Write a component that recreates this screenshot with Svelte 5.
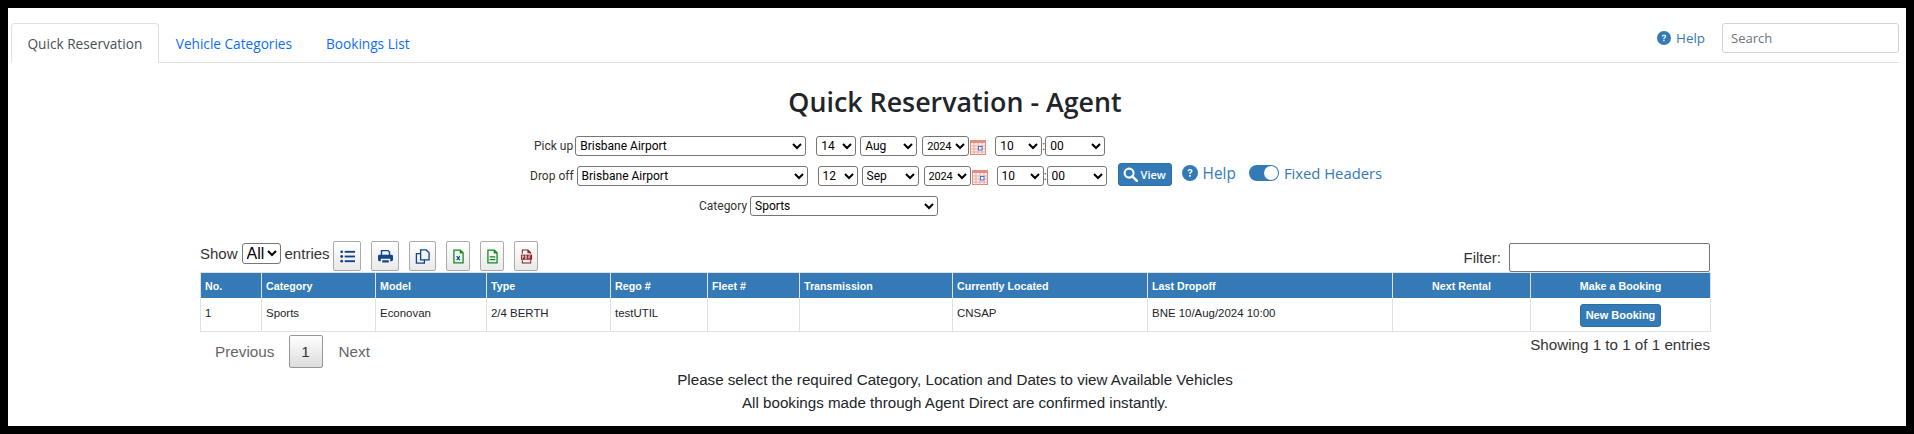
<script lang="ts">
  const columns = [
    { label: "No.", width: 61 },
    { label: "Category", width: 114 },
    { label: "Model", width: 111 },
    { label: "Type", width: 124 },
    { label: "Rego #", width: 97 },
    { label: "Fleet #", width: 92 },
    { label: "Transmission", width: 153 },
    { label: "Currently Located", width: 195 },
    { label: "Last Dropoff", width: 245 },
    { label: "Next Rental", width: 138, center: true },
    { label: "Make a Booking", width: 180, center: true },
  ];

  const row = ["1", "Sports", "Econovan", "2/4 BERTH", "testUTIL", "", "", "CNSAP", "BNE 10/Aug/2024 10:00", ""];
  const days = ["12", "14"];
  const months = ["Aug", "Sep"];
</script>

<div class="frame">
  <div class="page">
    <nav class="tabs">
      <a class="tab active" href="#quick">Quick Reservation</a>
      <a class="tab" href="#categories">Vehicle Categories</a>
      <a class="tab" href="#bookings">Bookings List</a>
      <div class="tabs-right">
        <a class="help" href="#help">
          <svg class="q-icon small" viewBox="0 0 16 16"><circle cx="8" cy="8" r="8" fill="#337ab7" /><path d="M5.6 6.2C5.7 4.8 6.7 4 8.1 4c1.4 0 2.4.8 2.4 2 0 1-.6 1.4-1.2 1.8-.5.3-.7.6-.7 1.2H7.2c0-1 .3-1.5 1-2 .5-.3.8-.6.8-1 0-.5-.4-.8-.9-.8-.6 0-1 .4-1.1 1z" fill="#fff" /><rect x="7.1" y="10" width="1.6" height="1.7" fill="#fff" /></svg>
          Help
        </a>
        <input class="search" type="text" placeholder="Search" />
      </div>
    </nav>

    <h1>Quick Reservation - Agent</h1>

    <form class="filters">
      <div class="line pickup">
        <label for="pick">Pick up</label>
        <select id="pick" class="loc"><option>Brisbane Airport</option></select>
        <select class="day"><option selected>14</option>{#each days as d}<option>{d}</option>{/each}</select>
        <select class="month"><option selected>Aug</option>{#each months as m}<option>{m}</option>{/each}</select>
        <select class="year"><option>2024</option></select>
        <svg class="cal" viewBox="0 0 16 16"><rect x=".5" y="1.500" width="15" height="14" fill="#fdf3f1" stroke="#dd8277" /><rect x="0" y="1" width="16" height="3" fill="#e58d83" /><path d="M0 7h16M0 10h16M0 13h16M4 4v12M8 4v12M12 4v12" stroke="#eda79e" stroke-width="1" /><rect x="8.500" y="7.500" width="3.500" height="3.500" fill="#fff" stroke="#3f73e0" /></svg>
        <select class="hour"><option>10</option></select>
        <span class="colon">:</span>
        <select class="minute"><option>00</option></select>
      </div>
      <div class="line dropoff">
        <label for="drop">Drop off</label>
        <select id="drop" class="loc"><option>Brisbane Airport</option></select>
        <select class="day"><option selected>12</option>{#each days as d}<option>{d}</option>{/each}</select>
        <select class="month"><option selected>Sep</option>{#each months as m}<option>{m}</option>{/each}</select>
        <select class="year"><option>2024</option></select>
        <svg class="cal" viewBox="0 0 16 16"><rect x=".5" y="1.500" width="15" height="14" fill="#fdf3f1" stroke="#dd8277" /><rect x="0" y="1" width="16" height="3" fill="#e58d83" /><path d="M0 7h16M0 10h16M0 13h16M4 4v12M8 4v12M12 4v12" stroke="#eda79e" stroke-width="1" /><rect x="8.500" y="7.500" width="3.500" height="3.500" fill="#fff" stroke="#3f73e0" /></svg>
        <select class="hour"><option>10</option></select>
        <span class="colon">:</span>
        <select class="minute"><option>00</option></select>
        <button type="button" class="view">
          <svg viewBox="0 0 16 16" width="15" height="15"><circle cx="6.5" cy="6.5" r="4.8" fill="none" stroke="#fff" stroke-width="2.2" /><path d="M10 10l4.8 4.8" stroke="#fff" stroke-width="2.6" stroke-linecap="round" /></svg>
          View
        </button>
        <a class="help big" href="#help">
          <svg class="q-icon" viewBox="0 0 16 16"><circle cx="8" cy="8" r="8" fill="#337ab7" /><path d="M5.6 6.2C5.7 4.8 6.7 4 8.1 4c1.4 0 2.4.8 2.4 2 0 1-.6 1.4-1.2 1.8-.5.3-.7.6-.7 1.2H7.2c0-1 .3-1.5 1-2 .5-.3.8-.6.8-1 0-.5-.4-.8-.9-.8-.6 0-1 .4-1.1 1z" fill="#fff" /><rect x="7.1" y="10" width="1.6" height="1.7" fill="#fff" /></svg>
          Help
        </a>
        <span class="toggle"><span class="knob"></span></span>
        <span class="toggle-label">Fixed Headers</span>
      </div>
      <div class="line category">
        <label for="cat">Category</label>
        <select id="cat" class="cat-select"><option>Sports</option></select>
      </div>
    </form>

    <section class="listing">
      <div class="toolbar">
        <span class="show">Show
          <select class="entries"><option>All</option></select>
          entries</span>
        <div class="buttons">
          <button type="button" class="tool" style="width:28px" aria-label="Columns">
            <svg viewBox="0 0 16 16" width="15" height="15"><g fill="#12448a"><circle cx="1.8" cy="3" r="1.5" /><circle cx="1.8" cy="8" r="1.5" /><circle cx="1.8" cy="13" r="1.5" /><rect x="5" y="2" width="11" height="2" /><rect x="5" y="7" width="11" height="2" /><rect x="5" y="12" width="11" height="2" /></g></svg>
          </button>
          <button type="button" class="tool" style="width:28px" aria-label="Print">
            <svg viewBox="0 0 16 16" width="15" height="15"><path d="M3 6V1h8l2 2v3h-1.5V3.5L10.5 2.5h-6V6z M4.5 12h7v2.5h-7z M3 13H1.5C.7 13 0 12.3 0 11.500V7.500C0 6.700.7 6 1.500 6h13c.8 0 1.500.7 1.500 1.500v4c0 .8-.7 1.500-1.500 1.500H13v-2.500H3z" fill="#12448a" /></svg>
          </button>
          <button type="button" class="tool" style="width:27px" aria-label="Copy">
            <svg viewBox="0 0 16 16" width="15" height="15" fill="none" stroke="#12448a" stroke-width="1.400"><path d="M6 1h6l3 3v7.500H6z" /><path d="M6 5H1.500v10H10v-3.500" /></svg>
          </button>
          <button type="button" class="tool" style="width:24px" aria-label="Excel">
            <svg viewBox="0 0 12 16" width="11" height="15"><path d="M1 1h7l3 3v11H1z M8 1v3h3" fill="none" stroke="#118a1e" stroke-width="1.400" /><path d="M4 7.500l3.500 4.500M7.500 7.500L4 12" stroke="#12448a" stroke-width="1.300" /></svg>
          </button>
          <button type="button" class="tool" style="width:24px" aria-label="CSV">
            <svg viewBox="0 0 12 16" width="11" height="15"><path d="M1 1h7l3 3v11H1z M8 1v3h3" fill="none" stroke="#118a1e" stroke-width="1.400" /><path d="M3 8.500h6M3 11.500h6" stroke="#118a1e" stroke-width="1.300" /></svg>
          </button>
          <button type="button" class="tool" style="width:24px" aria-label="PDF">
            <svg viewBox="0 0 14 16" width="13" height="15"><path d="M2.500 5V1h6l3 3v1 M2.500 12v3h9v-3 M8.500 1v3h3" fill="none" stroke="#8a1c1c" stroke-width="1.100" /><rect x="1" y="6" width="12" height="5.500" fill="#8a1c1c" /><path d="M2.500 7v3.500M2.500 7.300h1.500v1.500H2.500M5.800 7v3.500h1l.6-1.700-.6-1.800zM9.500 7v3.500M9.500 7.300h2M9.500 8.800h1.500" stroke="#fff" stroke-width=".7" fill="none" /></svg>
          </button>
        </div>
        <label class="filter">Filter: <input type="text" /></label>
      </div>

      <table>
        <colgroup>
          {#each columns as col}
            <col style="width:{col.width}px" />
          {/each}
        </colgroup>
        <thead>
          <tr>
            {#each columns as col}
              <th class:center={col.center}>{col.label}</th>
            {/each}
          </tr>
        </thead>
        <tbody>
          <tr>
            {#each row as cell}
              <td>{cell}</td>
            {/each}
            <td class="center"><button type="button" class="book">New Booking</button></td>
          </tr>
        </tbody>
      </table>

      <div class="footer">
        <div class="pager">
          <span class="page-link">Previous</span>
          <span class="page-num">1</span>
          <span class="page-link">Next</span>
        </div>
        <div class="info">Showing 1 to 1 of 1 entries</div>
      </div>
    </section>

    <p class="note first">Please select the required Category, Location and Dates to view Available Vehicles</p>
    <p class="note">All bookings made through Agent Direct are confirmed instantly.</p>
  </div>
</div>

<style>
  :global(body) {
    margin: 0;
    background: #000;
  }

  .frame {
    width: 1914px;
    height: 434px;
    box-sizing: border-box;
    padding: 8px;
    overflow: hidden;
  }

  .page {
    height: 418px;
    background: #fff;
    padding: 15px 7px 0 3px;
    box-sizing: border-box;
    font-family: "Open Sans", "Liberation Sans", sans-serif;
    color: #212529;
    overflow: hidden;
  }

  /* Tabs */
  .tabs {
    display: flex;
    height: 40px;
    box-sizing: border-box;
    border-bottom: 1px solid #dee2e6;
  }

  .tab {
    height: 40px;
    box-sizing: border-box;
    padding: 10px 16px 0;
    font-size: 13.65px;
    line-height: 20px;
    color: #0d6efd;
    text-decoration: none;
    border: 1px solid transparent;
  }

  .tab.active {
    color: #495057;
    background: #fff;
    padding: 10px 15.5px 0;
    border-color: #dee2e6 #dee2e6 #fff;
    border-radius: 4px 4px 0 0;
  }

  .tabs-right {
    margin-left: auto;
    display: flex;
    align-items: flex-start;
    gap: 17px;
  }

  .help {
    display: inline-flex;
    align-items: center;
    gap: 5px;
    color: #337ab7;
    text-decoration: none;
    font-size: 13.4px;
    height: 30px;
  }

  .q-icon {
    width: 16px;
    height: 16px;
  }

  .q-icon.small {
    width: 14px;
    height: 14px;
  }

  .search {
    width: 177px;
    height: 30px;
    box-sizing: border-box;
    border: 1px solid #ced4da;
    border-radius: 3px;
    padding: 0 8px;
    font: 13px "Open Sans", sans-serif;
    color: #495057;
  }

  .search::placeholder {
    color: #6c757d;
  }

  h1 {
    margin: 22px 0 0;
    text-align: center;
    font-size: 26.8px;
    line-height: 34px;
    font-weight: 600;
  }

  /* Reservation form */
  .filters {
    margin-top: 12px;
    font: 12px Roboto, "Liberation Sans", sans-serif;
    color: #333;
  }

  .line {
    display: flex;
    align-items: center;
    height: 30px;
  }

  .line label {
    margin-right: 3px;
  }

  .pickup {
    padding-left: 523px;
  }

  .pickup label {
    margin-right: 2px;
  }

  .dropoff {
    padding-left: 519px;
  }

  .category {
    padding-left: 688px;
  }

  select {
    height: 20px;
    box-sizing: border-box;
    font: 12px Roboto, sans-serif;
    color: #000;
    background: #fff;
    border: 1px solid #767676;
    border-radius: 3px;
    padding: 0;
  }

  .loc {
    width: 231px;
    margin-right: 10px;
  }

  .day {
    width: 40px;
    margin-right: 4px;
  }

  .month {
    width: 57px;
    margin-right: 5px;
  }

  .year {
    width: 47px;
    font-size: 11px;
    letter-spacing: -0.2px;
  }

  .cal {
    width: 16px;
    height: 16px;
    margin: 1px 9px 0 1px;
  }

  .hour {
    width: 47px;
  }

  .colon {
    width: 3px;
    text-align: center;
  }

  .minute {
    width: 60px;
  }

  .cat-select {
    width: 188px;
  }

  .view {
    display: inline-flex;
    align-items: center;
    gap: 3px;
    width: 54px;
    height: 23px;
    margin: -3px 10px 0 11px;
    padding: 0 0 0 4px;
    background: #337ab7;
    color: #fff;
    border: 1px solid #2e6da4;
    border-radius: 3px;
    font: 600 11px "Open Sans", sans-serif;
  }

  .help.big {
    font: 15.4px "Open Sans", sans-serif;
    height: 20px;
    margin-top: -6px;
    gap: 5px;
  }

  .toggle {
    width: 30px;
    height: 16px;
    margin: -6px 5px 0 13px;
    border-radius: 8px;
    background: #337ab7;
    display: flex;
    justify-content: flex-end;
    align-items: center;
    padding-right: 1px;
    box-sizing: border-box;
  }

  .knob {
    width: 14px;
    height: 14px;
    border-radius: 50%;
    background: #fff;
  }

  .toggle-label {
    margin-top: -6px;
    font: 14.8px "Open Sans", sans-serif;
    color: #337ab7;
  }

  /* Listing */
  .listing {
    width: 1510px;
    margin: 20px 0 0 189px;
    font-family: "Liberation Sans", Arial, sans-serif;
    color: #333;
  }

  .toolbar {
    display: flex;
    align-items: flex-start;
    height: 31px;
    font-size: 15px;
  }

  .show {
    margin-top: 2px;
    width: 133px;
    white-space: nowrap;
    display: flex;
    align-items: center;
    gap: 4px;
    font-size: 15px;
  }

  .entries {
    width: 39px;
    height: 21px;
    font: 16px "Liberation Sans", sans-serif;
  }

  .buttons {
    display: flex;
    gap: 10px;
  }

  .tool {
    height: 30px;
    padding: 0;
    display: flex;
    align-items: center;
    justify-content: center;
    background: linear-gradient(#fff, #e9e9e9);
    border: 1px solid #aaa;
    border-radius: 2px;
  }

  .filter {
    margin-left: auto;
    margin-top: 2px;
    display: flex;
    align-items: center;
    gap: 8px;
    height: 29px;
    font-size: 15px;
  }

  .filter input {
    width: 201px;
    height: 29px;
    box-sizing: border-box;
    border: 1px solid #767676;
    border-radius: 2px;
  }

  table {
    width: 1510px;
    table-layout: fixed;
    border-collapse: collapse;
    font-size: 11.45px;
  }

  th {
    height: 26px;
    padding: 0 4px;
    background: #337ab7;
    color: #fff;
    font-size: 10.7px;
    font-weight: 700;
    text-align: left;
    border: 1px solid #dee2e6;
    border-bottom-color: #fff;
    box-sizing: border-box;
    white-space: nowrap;
  }

  th + th {
    border-left-color: #fff;
  }

  td {
    height: 33px;
    padding: 0 4px 4px;
    border: 1px solid #dee2e6;
    box-sizing: border-box;
    color: #212529;
    white-space: nowrap;
  }

  .center {
    text-align: center;
  }

  .book {
    width: 81px;
    height: 23px;
    margin-top: 4px;
    padding: 0;
    background: #337ab7;
    color: #fff;
    border: 1px solid #2e6da4;
    border-radius: 3px;
    font: 700 11px "Liberation Sans", sans-serif;
  }

  .footer {
    display: flex;
    justify-content: space-between;
    align-items: flex-start;
  }

  .pager {
    display: flex;
    align-items: center;
    margin-top: 3px;
    padding-left: 15px;
    font-size: 15.3px;
    color: #666;
  }

  .page-num {
    width: 34px;
    height: 33px;
    margin: 0 16px 0 14px;
    box-sizing: border-box;
    display: flex;
    align-items: center;
    justify-content: center;
    color: #333;
    background: linear-gradient(#fff, #dcdcdc);
    border: 1px solid #979797;
    border-radius: 2px;
  }

  .info {
    margin-top: 4px;
    font-size: 15.2px;
  }

  .note {
    margin: 0;
    text-align: center;
    font-family: "Liberation Sans", Arial, sans-serif;
    font-size: 15.17px;
    line-height: 23px;
    color: #212529;
  }

  .note.first {
    margin-top: 0;
  }
</style>
